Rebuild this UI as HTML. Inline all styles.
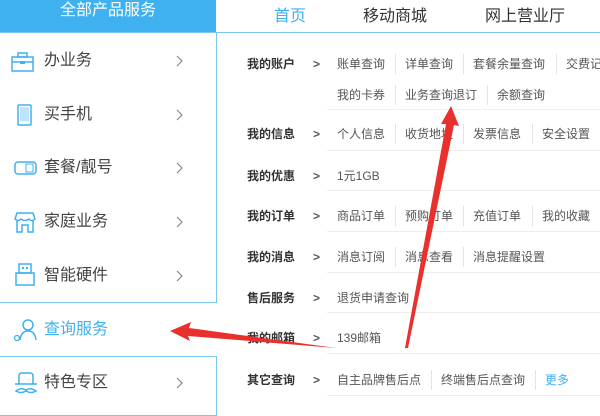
<!DOCTYPE html>
<html><head><meta charset="utf-8"><style>
*{margin:0;padding:0;box-sizing:border-box}
body{width:600px;height:400px;overflow:hidden;background:#fff;font-family:"Liberation Sans","Noto Sans CJK SC",sans-serif;position:relative}
.hdr{position:absolute;left:0;top:0;width:216px;height:33px;background:#3fb0f0;color:#fff;font-size:16px;text-align:center;line-height:22px}
.line{position:absolute;left:216px;top:32px;width:384px;height:1px;background:#7cc6f0}
.nav{position:absolute;top:2px;font-size:16px;color:#333}
.box{position:absolute;left:-1px;width:218px;border:1px solid #7cc6f0;background:#fff}
.mi{position:absolute;left:44px;font-size:16px;color:#444;line-height:20px}
.ch{position:absolute;left:176px}
.ic{position:absolute;left:11px}
.lb{position:absolute;left:247px;font-size:12px;font-weight:bold;color:#333;line-height:16px}
.gt{position:absolute;left:313px;font-size:12px;font-weight:bold;color:#555;line-height:16px}
.it{position:absolute;font-size:12px;color:#555;line-height:16px}
.vs{position:absolute;width:1px;height:20px;background:#e3e3e3}
.hs{position:absolute;left:327px;width:273px;height:1px;background:#eee}
</style></head><body>
<div class="hdr">全部产品服务</div>
<div class="line"></div>
<div class="nav" style="left:274px;color:#3fb0f0">首页</div>
<div class="nav" style="left:363px">移动商城</div>
<div class="nav" style="left:485px">网上营业厅</div>

<div class="box" style="top:32px;height:271px"></div>
<div class="box" style="top:356px;height:60px"></div>

<svg class="ic" style="top:52px" width="24" height="20" viewBox="0 0 24 20"><rect x="1" y="5" width="21" height="14" fill="none" stroke="#3fb0f0" stroke-width="1.5"/><rect x="7" y="1" width="9" height="4" fill="none" stroke="#3fb0f0" stroke-width="1.5"/><line x1="1" y1="10" x2="22" y2="10" stroke="#3fb0f0" stroke-width="1.5"/><rect x="9" y="9" width="5" height="3" fill="#3fb0f0"/></svg>
<div class="mi" style="top:51px">办业务</div><svg class="ch" style="top:55px" width="8" height="12"><polyline points="1,1 6,6 1,11" fill="none" stroke="#888" stroke-width="1.2"/></svg>
<svg class="ic" style="left:17px;top:104px" width="16" height="22"><rect x="1" y="1" width="13" height="20" rx="1" fill="none" stroke="#3fb0f0" stroke-width="1.5"/><rect x="3" y="3" width="9" height="14" fill="#bfe3f8"/></svg>
<div class="mi" style="top:105px">买手机</div><svg class="ch" style="top:109px" width="8" height="12"><polyline points="1,1 6,6 1,11" fill="none" stroke="#888" stroke-width="1.2"/></svg>
<svg class="ic" style="left:14px;top:161px" width="24" height="14"><rect x="1" y="1" width="21" height="12" rx="3" fill="none" stroke="#3fb0f0" stroke-width="1.5"/><rect x="12" y="3" width="7" height="8" fill="none" stroke="#3fb0f0"/></svg>
<div class="mi" style="top:158px">套餐/靓号</div><svg class="ch" style="top:162px" width="8" height="12"><polyline points="1,1 6,6 1,11" fill="none" stroke="#888" stroke-width="1.2"/></svg>
<svg class="ic" style="left:13px;top:211px" width="24" height="22"><path d="M2 8 L4 2 H20 L22 8 Q19 11 16 8 Q12 11 8 8 Q5 11 2 8 Z M4 10 V21 H9 V14 H15 V21 H20 V10" fill="none" stroke="#3fb0f0" stroke-width="1.5"/></svg>
<div class="mi" style="top:212px">家庭业务</div><svg class="ch" style="top:216px" width="8" height="12"><polyline points="1,1 6,6 1,11" fill="none" stroke="#888" stroke-width="1.2"/></svg>
<svg class="ic" style="left:15px;top:263px" width="20" height="24"><rect x="4" y="1" width="12" height="9" fill="none" stroke="#3fb0f0" stroke-width="1.5"/><rect x="1" y="10" width="18" height="12" fill="none" stroke="#3fb0f0" stroke-width="1.5"/><rect x="7" y="4" width="2" height="2" fill="#3fb0f0"/><rect x="11" y="4" width="2" height="2" fill="#3fb0f0"/></svg>
<div class="mi" style="top:266px">智能硬件</div><svg class="ch" style="top:270px" width="8" height="12"><polyline points="1,1 6,6 1,11" fill="none" stroke="#888" stroke-width="1.2"/></svg>
<svg class="ic" style="left:13px;top:318px" width="24" height="24"><circle cx="15" cy="7" r="5" fill="none" stroke="#3fb0f0" stroke-width="1.5"/><path d="M7 22 Q8 13 15 13 Q22 13 23 22" fill="none" stroke="#3fb0f0" stroke-width="1.5"/><circle cx="4" cy="20" r="2.5" fill="none" stroke="#3fb0f0" stroke-width="1.3"/></svg>
<div class="mi" style="top:320px;color:#3fb0f0">查询服务</div>
<svg class="ic" style="left:13px;top:372px" width="26" height="24"><path d="M6 12 V4 Q6 1 9 1 H17 Q20 1 20 4 V12" fill="none" stroke="#3fb0f0" stroke-width="1.5"/><line x1="2" y1="12" x2="24" y2="12" stroke="#3fb0f0" stroke-width="1.5"/><path d="M3 19 Q8 15 13 18 Q18 15 23 19 Q18 22 13 19 Q8 22 3 19Z" fill="none" stroke="#3fb0f0" stroke-width="1.5"/></svg>
<div class="mi" style="top:373px">特色专区</div><svg class="ch" style="top:377px" width="8" height="12"><polyline points="1,1 6,6 1,11" fill="none" stroke="#888" stroke-width="1.2"/></svg>

<div class="lb" style="top:56px">我的账户</div><div class="gt" style="top:56px">&gt;</div>
<div class="it" style="left:337px;top:56px">账单查询</div><div class="vs" style="left:395px;top:54px"></div>
<div class="it" style="left:405px;top:56px">详单查询</div><div class="vs" style="left:463px;top:54px"></div>
<div class="it" style="left:473px;top:56px">套餐余量查询</div><div class="vs" style="left:556px;top:54px"></div>
<div class="it" style="left:566px;top:56px;white-space:nowrap">交费记录</div>
<div class="it" style="left:337px;top:87px">我的卡券</div><div class="vs" style="left:395px;top:85px"></div>
<div class="it" style="left:405px;top:87px">业务查询退订</div><div class="vs" style="left:487px;top:85px"></div>
<div class="it" style="left:497px;top:87px">余额查询</div>
<div class="hs" style="top:109px"></div>

<div class="lb" style="top:126px">我的信息</div><div class="gt" style="top:126px">&gt;</div>
<div class="it" style="left:337px;top:126px">个人信息</div><div class="vs" style="left:395px;top:124px"></div>
<div class="it" style="left:405px;top:126px">收货地址</div><div class="vs" style="left:463px;top:124px"></div>
<div class="it" style="left:473px;top:126px">发票信息</div><div class="vs" style="left:532px;top:124px"></div>
<div class="it" style="left:542px;top:126px">安全设置</div>
<div class="hs" style="top:150px"></div>

<div class="lb" style="top:168px">我的优惠</div><div class="gt" style="top:168px">&gt;</div>
<div class="it" style="left:337px;top:168px">1元1GB</div>
<div class="hs" style="top:190px"></div>

<div class="lb" style="top:208px">我的订单</div><div class="gt" style="top:208px">&gt;</div>
<div class="it" style="left:337px;top:208px">商品订单</div><div class="vs" style="left:395px;top:206px"></div>
<div class="it" style="left:405px;top:208px">预购订单</div><div class="vs" style="left:463px;top:206px"></div>
<div class="it" style="left:473px;top:208px">充值订单</div><div class="vs" style="left:532px;top:206px"></div>
<div class="it" style="left:542px;top:208px">我的收藏</div>
<div class="hs" style="top:231px"></div>

<div class="lb" style="top:249px">我的消息</div><div class="gt" style="top:249px">&gt;</div>
<div class="it" style="left:337px;top:249px">消息订阅</div><div class="vs" style="left:395px;top:247px"></div>
<div class="it" style="left:405px;top:249px">消息查看</div><div class="vs" style="left:463px;top:247px"></div>
<div class="it" style="left:473px;top:249px">消息提醒设置</div>
<div class="hs" style="top:272px"></div>

<div class="lb" style="top:290px">售后服务</div><div class="gt" style="top:290px">&gt;</div>
<div class="it" style="left:337px;top:290px">退货申请查询</div>
<div class="hs" style="top:312px"></div>

<div class="lb" style="top:330px">我的邮箱</div><div class="gt" style="top:330px">&gt;</div>
<div class="it" style="left:337px;top:330px">139邮箱</div>
<div class="hs" style="top:353px"></div>

<div class="lb" style="top:372px">其它查询</div><div class="gt" style="top:372px">&gt;</div>
<div class="it" style="left:337px;top:372px">自主品牌售后点</div><div class="vs" style="left:431px;top:370px"></div>
<div class="it" style="left:441px;top:372px">终端售后点查询</div><div class="vs" style="left:535px;top:370px"></div>
<div class="it" style="left:545px;top:372px;color:#3fb0f0">更多</div>
<div class="hs" style="top:395px"></div>

<svg style="position:absolute;left:0;top:0" width="600" height="400">
<polygon points="170,331 191,322 189,328 336,348 188,336 190,341" fill="#e8302c"/>
<polygon points="451,106 459,126 454,125 408,348 405,348 446,124 441,124" fill="#e8302c"/>
</svg>
</body></html>
